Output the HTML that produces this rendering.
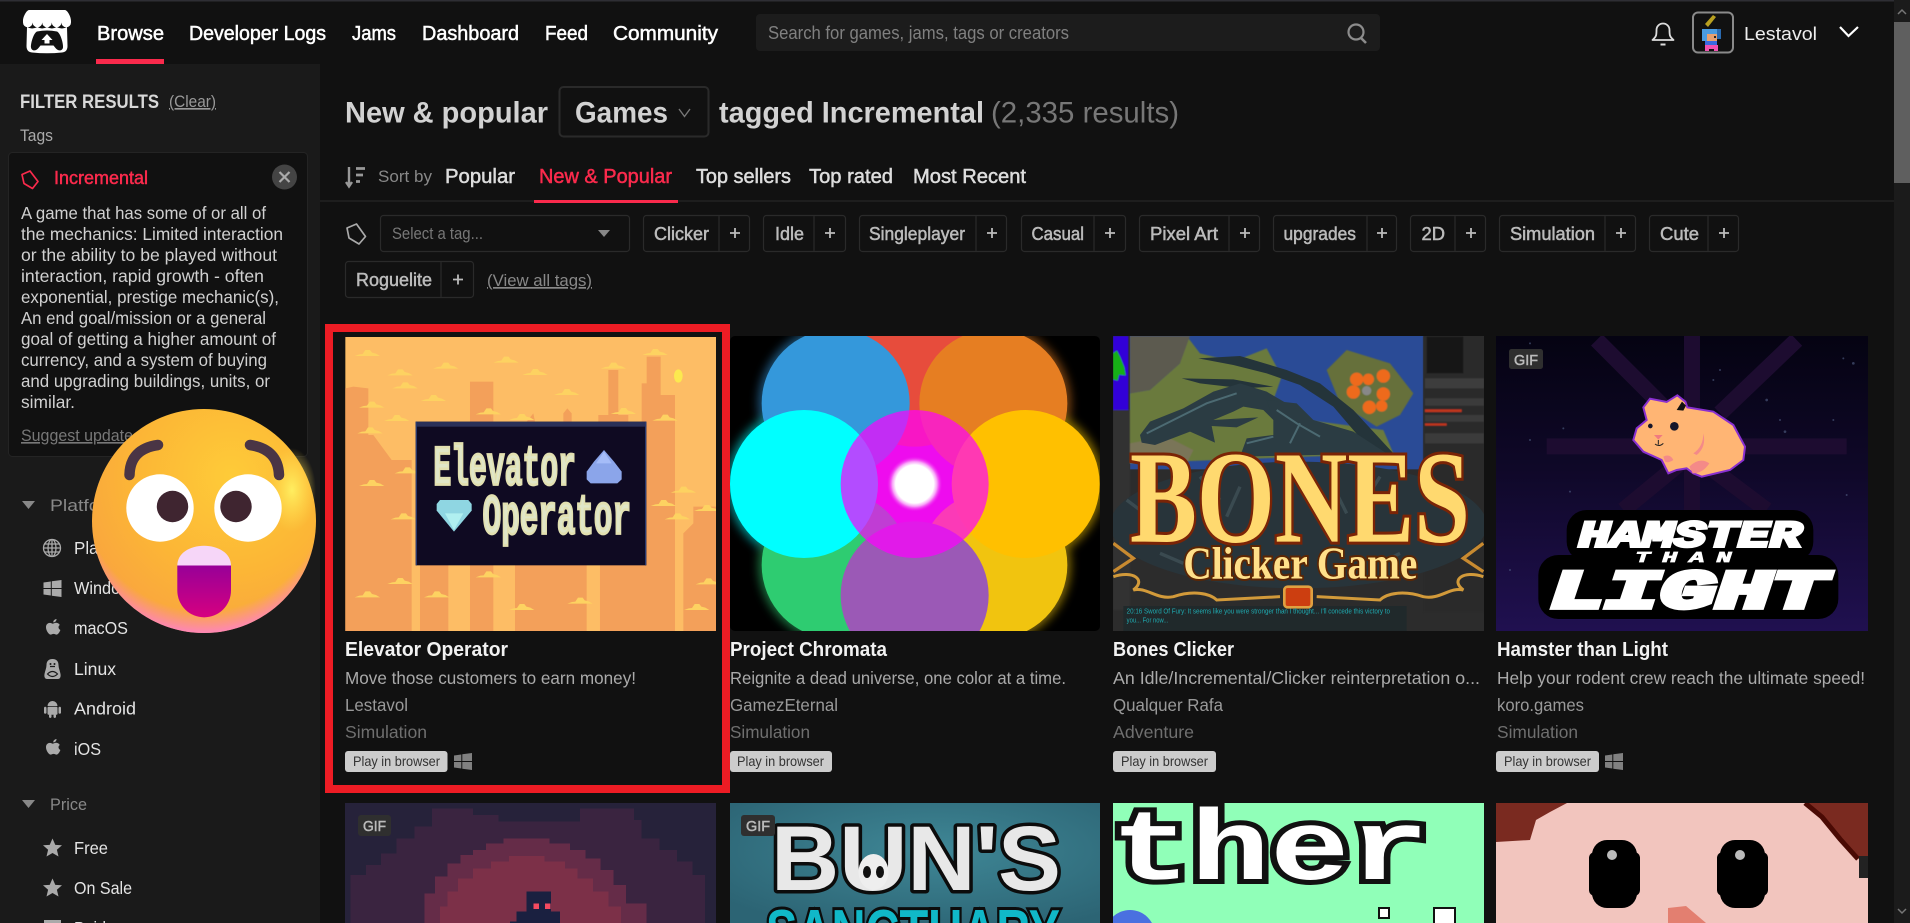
<!DOCTYPE html>
<html lang="en"><head><meta charset="utf-8"><title>Browse games tagged Incremental</title>
<style>
html,body{margin:0;padding:0;background:#111;overflow:hidden;width:1910px;height:923px}
svg{display:block}
text{font-family:"Liberation Sans",sans-serif;white-space:pre}
.mono{font-family:"Liberation Mono",monospace;font-weight:bold}
.serif{font-family:"Liberation Serif",serif;font-weight:bold}
.m{stroke:currentColor;stroke-width:.5px}
.nav{font-size:20px;fill:#fff;color:#fff}
.tab{font-size:20px;fill:#ddd;color:#ddd}
.pl{font-size:18px;fill:#bbb;color:#bbb}
.d{font-size:17.5px;fill:#d0d0d0}
.it{font-size:17.5px;fill:#e4e4e4}
.hd{font-size:17px;fill:#888}
.h1{font-size:30px;font-weight:bold;fill:#d2d2d2}
.ct{font-size:20px;font-weight:bold;fill:#f2f2f2}
.cd{font-size:17.5px;fill:#aaa}
.ca{font-size:17.5px;fill:#999}
.cg{font-size:17.5px;fill:#6f6f6f}
.pb{font-size:14px;fill:#333}
.gif{font-size:15px;fill:#bbb;color:#bbb}
</style></head><body>
<svg xmlns="http://www.w3.org/2000/svg" width="1910" height="923" viewBox="0 0 1910 923">
<defs>
<clipPath id="c1"><rect x="345" y="337" width="371" height="294"/></clipPath>
<clipPath id="c2"><rect x="730" y="336" width="370" height="295" rx="5"/></clipPath>
<clipPath id="c3"><rect x="1113" y="336" width="371" height="295"/></clipPath>
<clipPath id="c4"><rect x="1496" y="336" width="372" height="295"/></clipPath>
<clipPath id="c5"><rect x="345" y="803" width="371" height="120"/></clipPath>
<clipPath id="c6"><rect x="730" y="803" width="370" height="120"/></clipPath>
<clipPath id="c7"><rect x="1113" y="803" width="371" height="120"/></clipPath>
<clipPath id="c8"><rect x="1496" y="803" width="372" height="120"/></clipPath>
<polygon id="cl" points="-38,8 -24,3 -14,2 -6,-10 8,-10 14,-2 26,1 38,8"/>
<g id="win"><polygon points="0,2.500 7.300,1.500 7.300,8 0,8"/><polygon points="8.300,1.300 18,0 18,8 8.300,8"/><polygon points="0,9 7.300,9 7.300,15.500 0,14.500"/><polygon points="8.300,9 18,9 18,17 8.300,15.800"/></g>
<path id="ap" d="M11.500 0c.2 1.700-1.400 3.500-3.200 3.400C8 1.800 9.700.2 11.500 0zM14.800 6c-1.900 1.100-1.700 3.900.6 5-.6 1.700-2.200 4.600-3.900 4.600-1 0-1.600-.7-2.900-.7s-2 .7-2.900.7C3.900 15.600 1 11.700 1 8.200 1 5.300 3 3.900 4.800 3.900c1.200 0 2.200.8 3 .8.700 0 1.900-.9 3.300-.9 1.100 0 2.800.6 3.700 2.200z"/>
<polygon id="st" points="0,-9.500 2.800,-3.100 9.500,-2.700 4.400,1.800 6,8.500 0,5 -6,8.500 -4.400,1.800 -9.500,-2.700 -2.800,-3.100"/>
<radialGradient id="em" cx=".62" cy=".3" r=".78"><stop offset="0" stop-color="#fecb38"/><stop offset=".55" stop-color="#fcb636"/><stop offset=".9" stop-color="#f9a63e"/><stop offset="1" stop-color="#f69a45"/></radialGradient>
<radialGradient id="em2" cx=".5" cy=".36" r=".66"><stop offset=".82" stop-color="#ff80d0" stop-opacity="0"/><stop offset="1" stop-color="#ff80d0"/></radialGradient>
<radialGradient id="em3" cx=".5" cy=".5" r=".5"><stop offset="0" stop-color="#ffee60"/><stop offset="1" stop-color="#ffe050" stop-opacity="0"/></radialGradient>
<linearGradient id="mo" x1="0" y1="0" x2="0" y2="1"><stop offset="0" stop-color="#980098"/><stop offset="1" stop-color="#d60080"/></linearGradient>
<linearGradient id="hb" x1="0" y1="0" x2="0" y2="1"><stop offset="0" stop-color="#050312"/><stop offset=".45" stop-color="#0f0828"/><stop offset="1" stop-color="#201050"/></linearGradient>
<radialGradient id="bn" cx=".55" cy=".4" r=".7"><stop offset="0" stop-color="#3f8796"/><stop offset="1" stop-color="#2c6474"/></radialGradient>
<radialGradient id="wg" cx=".5" cy=".5" r=".5"><stop offset=".68" stop-color="#fff"/><stop offset=".8" stop-color="#f8a0f8"/><stop offset="1" stop-color="#ee0cee" stop-opacity="0"/></radialGradient>
<filter id="bl" x="-30%" y="-30%" width="160%" height="160%"><feGaussianBlur stdDeviation="14"/></filter>
<filter id="bs" x="-5%" y="-5%" width="110%" height="110%"><feGaussianBlur stdDeviation="1.500"/></filter>
</defs>

<!-- page -->
<rect width="1910" height="923" fill="#111"/>
<rect width="1910" height="1.500" fill="#2e2e34"/>
<rect x="0" y="64" width="320" height="859" fill="#1a1a1a"/>
<rect x="1894" y="0" width="16" height="923" fill="#1b1b1b"/>
<rect x="1894" y="22" width="16" height="161" fill="#5f5f5f"/>
<path d="M1898 14l4-4 4 4M1898 909l4 4 4-4" fill="none" stroke="#777" stroke-width="1.500"/>

<!-- logo -->
<path fill="#fff" d="M29 10H65C67 10 71 16 71 21V22.500A4.800 4.800 0 0 1 61.400 22.500A4.800 4.800 0 0 1 51.800 22.500A4.800 4.800 0 0 1 42.200 22.500A4.800 4.800 0 0 1 32.600 22.500A4.800 4.800 0 0 1 23 22.500V21C23 16 27 10 29 10Z"/>
<path fill="#fff" d="M27 27Q32 30 37.400 27Q42 30 47 27Q52 30 56.600 27Q62 30 67 27L67.500 46Q67.500 52 62 52.500Q47 54 32 52.500Q26.500 52 26.500 46Z"/>
<path fill="#111" d="M37 31.500Q47 29.500 57 31.500C60.500 33 63.500 44 63 47.500C62.500 51 58 51.500 55.500 48L53.500 45.500H40.500L38.500 48C36 51.500 31.500 51 31 47.500C30.500 44 33.500 33 37 31.500Z"/>
<path fill="#fff" d="M47 34L52.500 40H49.500V43.500H44.500V40H41.500Z"/>

<!-- nav -->
<g class="m">
<text x="97" y="40" class="nav" textLength="67" lengthAdjust="spacingAndGlyphs">Browse</text>
<text x="189" y="40" class="nav" textLength="137" lengthAdjust="spacingAndGlyphs">Developer Logs</text>
<text x="352" y="40" class="nav" textLength="44" lengthAdjust="spacingAndGlyphs">Jams</text>
<text x="422" y="40" class="nav" textLength="97" lengthAdjust="spacingAndGlyphs">Dashboard</text>
<text x="545" y="40" class="nav" textLength="43" lengthAdjust="spacingAndGlyphs">Feed</text>
<text x="613" y="40" class="nav" textLength="105" lengthAdjust="spacingAndGlyphs">Community</text>
</g>
<rect x="96" y="59" width="68" height="5" fill="#fa2a4c"/>
<rect x="756" y="14" width="624" height="37" rx="4" fill="#1c1c1c"/>
<text x="768" y="39" font-size="18" fill="#808080" textLength="301" lengthAdjust="spacingAndGlyphs">Search for games, jams, tags or creators</text>
<circle cx="1356" cy="32" r="7.500" fill="none" stroke="#8c8c8c" stroke-width="2.200"/><path d="M1361 38l5 5" stroke="#8c8c8c" stroke-width="2.600"/>
<path d="M1654 38.500c2-2 2.500-3 2.500-8.500a6.500 6.500 0 0 1 13 0c0 5.500.5 6.500 2.500 8.500l1.500 1.500H1652.500Z" fill="none" stroke="#ddd" stroke-width="1.800" stroke-linejoin="round"/><path d="M1660.500 44.500h5" stroke="#ddd" stroke-width="2"/>
<rect x="1693" y="12.500" width="40" height="40" rx="5" fill="#111" stroke="#8a8a8a" stroke-width="2"/>
<polygon points="1705,24 1713,15 1716,17 1708,27" fill="#b8a020"/>
<rect x="1702" y="29" width="19" height="5" fill="#4a9be0"/><rect x="1702" y="34" width="5" height="7" fill="#4a9be0"/><rect x="1717" y="29" width="4" height="10" fill="#2a6ab0"/>
<rect x="1707" y="34" width="10" height="7" fill="#e8a070"/><rect x="1714" y="36" width="2" height="2" fill="#222"/>
<rect x="1705" y="41" width="12" height="4" fill="#3a6ae0"/><rect x="1705" y="45" width="13" height="4" fill="#f050b0"/><rect x="1705" y="49" width="4" height="2" fill="#f050b0"/><rect x="1714" y="49" width="4" height="2" fill="#f050b0"/>
<text x="1744" y="40" font-size="18" fill="#eee" textLength="73" lengthAdjust="spacingAndGlyphs">Lestavol</text>
<path d="M1840 27l8.500 9 9.500-9" fill="none" stroke="#fff" stroke-width="2.200"/>

<!-- sidebar -->
<text x="20" y="108" font-size="19" font-weight="bold" fill="#d8d8d8" textLength="139" lengthAdjust="spacingAndGlyphs">FILTER RESULTS</text>
<text x="169" y="107" font-size="16.500" fill="#999" text-decoration="underline" textLength="47" lengthAdjust="spacingAndGlyphs">(Clear)</text>
<text x="20" y="141" font-size="17" fill="#aaa" textLength="33" lengthAdjust="spacingAndGlyphs">Tags</text>
<rect x="8.500" y="152.500" width="299" height="304" rx="4" fill="#111" stroke="#242424"/>
<path d="M22 174.500l8-3.500 8 10.500-5.500 7-8.500-5Z" fill="none" stroke="#fa2a4c" stroke-width="1.700" stroke-linejoin="round"/>
<text x="54" y="184" font-size="18" fill="#fa2a4c" color="#fa2a4c" class="m" textLength="94" lengthAdjust="spacingAndGlyphs">Incremental</text>
<circle cx="284.500" cy="177" r="12.500" fill="#444"/><path d="M279.500 172l10 10M289.500 172l-10 10" stroke="#aaa" stroke-width="2.200"/>
<text x="21" y="219" class="d" textLength="245" lengthAdjust="spacingAndGlyphs">A game that has some of or all of</text>
<text x="21" y="240" class="d" textLength="262" lengthAdjust="spacingAndGlyphs">the mechanics: Limited interaction</text>
<text x="21" y="261" class="d" textLength="256" lengthAdjust="spacingAndGlyphs">or the ability to be played without</text>
<text x="21" y="282" class="d" textLength="243" lengthAdjust="spacingAndGlyphs">interaction, rapid growth - often</text>
<text x="21" y="303" class="d" textLength="258" lengthAdjust="spacingAndGlyphs">exponential, prestige mechanic(s),</text>
<text x="21" y="324" class="d" textLength="245" lengthAdjust="spacingAndGlyphs">An end goal/mission or a general</text>
<text x="21" y="345" class="d" textLength="255" lengthAdjust="spacingAndGlyphs">goal of getting a higher amount of</text>
<text x="21" y="366" class="d" textLength="246" lengthAdjust="spacingAndGlyphs">currency, and a system of buying</text>
<text x="21" y="387" class="d" textLength="249" lengthAdjust="spacingAndGlyphs">and upgrading buildings, units, or</text>
<text x="21" y="408" class="d" textLength="54" lengthAdjust="spacingAndGlyphs">similar.</text>
<text x="21" y="441" font-size="16.500" fill="#777" text-decoration="underline" textLength="112" lengthAdjust="spacingAndGlyphs">Suggest update</text>

<polygon points="22,501 35,501 28.500,509" fill="#888"/>
<text x="50" y="511" class="hd" textLength="72" lengthAdjust="spacingAndGlyphs">Platform</text>
<g transform="translate(52,548)" fill="none" stroke="#aaa" stroke-width="1.300"><circle r="8.500"/><ellipse rx="4" ry="8.500"/><path d="M0-8.500V8.500M-8.500 0H8.500M-7.500-4H7.500M-7.500 4H7.500"/></g>
<text x="74" y="554" class="it" textLength="116" lengthAdjust="spacingAndGlyphs">Play in browser</text>
<use href="#win" x="43.500" y="580" fill="#aaa"/>
<text x="74" y="594" class="it" textLength="66" lengthAdjust="spacingAndGlyphs">Windows</text>
<use href="#ap" x="45" y="619" fill="#aaa"/>
<text x="74" y="634" class="it" textLength="54" lengthAdjust="spacingAndGlyphs">macOS</text>
<g transform="translate(44,659)"><path d="M8.500 0C4 0 2.500 3 2.500 6C2.500 9 1 12 .5 15C0 18 1 20 3 20H14C16 20 17 18 16.500 15C16 12 14.500 9 14.500 6C14.500 3 13 0 8.500 0Z" fill="#aaa"/><path d="M6 7.500h5M3.500 15Q8.500 10 13.500 15Q8.500 20 3.500 15Z" fill="none" stroke="#1a1a1a" stroke-width="1.200"/><circle cx="6.500" cy="5" r="1" fill="#1a1a1a"/><circle cx="10.500" cy="5" r="1" fill="#1a1a1a"/></g>
<text x="74" y="675" class="it" textLength="42" lengthAdjust="spacingAndGlyphs">Linux</text>
<g transform="translate(44,699)" fill="#aaa"><path d="M3.500 7A5 5 0 0 1 13.500 7Z"/><rect x="3.500" y="7.800" width="10" height="8" rx="1"/><rect x="0" y="7.800" width="2.500" height="7" rx="1.200"/><rect x="14.500" y="7.800" width="2.500" height="7" rx="1.200"/><rect x="5" y="15" width="2.500" height="4" rx="1.200"/><rect x="9.500" y="15" width="2.500" height="4" rx="1.200"/></g>
<text x="74" y="714.500" class="it" textLength="62" lengthAdjust="spacingAndGlyphs">Android</text>
<use href="#ap" x="45" y="739" fill="#aaa"/>
<text x="74" y="755" class="it" textLength="27" lengthAdjust="spacingAndGlyphs">iOS</text>
<polygon points="22,800 35,800 28.500,808" fill="#888"/>
<text x="50" y="810" class="hd" textLength="37" lengthAdjust="spacingAndGlyphs">Price</text>
<use href="#st" x="52.500" y="848" fill="#aaa"/>
<text x="74" y="854" class="it" textLength="34" lengthAdjust="spacingAndGlyphs">Free</text>
<use href="#st" x="52.500" y="888" fill="#aaa"/>
<text x="74" y="894" class="it" textLength="58" lengthAdjust="spacingAndGlyphs">On Sale</text>
<rect x="44" y="920" width="17" height="12" fill="#aaa"/>
<text x="74" y="934" class="it" textLength="32" lengthAdjust="spacingAndGlyphs">Paid</text>

<!-- header row -->
<text x="345" y="122.500" class="h1" textLength="203" lengthAdjust="spacingAndGlyphs">New &amp; popular</text>
<rect x="559.500" y="87" width="149" height="49.500" rx="4" fill="none" stroke="#2a2a2a" stroke-width="2"/>
<text x="575" y="122.500" class="h1" textLength="93" lengthAdjust="spacingAndGlyphs">Games</text>
<path d="M679 109l5.500 7.500 5.500-7.500" fill="none" stroke="#777" stroke-width="1.400"/>
<text x="719" y="122.500" class="h1" textLength="265" lengthAdjust="spacingAndGlyphs">tagged Incremental</text>
<text x="991" y="122.500" font-size="30" fill="#777" textLength="188" lengthAdjust="spacingAndGlyphs">(2,335 results)</text>

<!-- sort row -->
<path d="M349 167v18M346 182l3 4.500 3-4.500" fill="none" stroke="#999" stroke-width="2.400"/><path d="M356 168.500h9M356 175h7M356 181.500h4" stroke="#999" stroke-width="2.800"/>
<text x="378" y="182" class="hd" textLength="54" lengthAdjust="spacingAndGlyphs">Sort by</text>
<g class="m">
<text x="445" y="183" class="tab" textLength="70" lengthAdjust="spacingAndGlyphs">Popular</text>
<text x="539" y="183" font-size="20" fill="#fa2a4c" color="#fa2a4c" textLength="133" lengthAdjust="spacingAndGlyphs">New &amp; Popular</text>
<text x="696" y="183" class="tab" textLength="95" lengthAdjust="spacingAndGlyphs">Top sellers</text>
<text x="809" y="183" class="tab" textLength="84" lengthAdjust="spacingAndGlyphs">Top rated</text>
<text x="913" y="183" class="tab" textLength="113" lengthAdjust="spacingAndGlyphs">Most Recent</text>
</g>
<rect x="320" y="200" width="1574" height="2" fill="#1e1e1e"/>
<rect x="534" y="200" width="144" height="3" fill="#fa2a4c"/>

<!-- tag row -->
<path d="M347 228l9.500-4 9 12.500-6.500 7.500-10-6Z" fill="none" stroke="#aaa" stroke-width="1.700" stroke-linejoin="round"/>
<rect x="380.500" y="215.500" width="249" height="36" rx="3" fill="none" stroke="#2a2a2a" stroke-width="1.200"/>
<text x="392" y="239" font-size="16.500" fill="#777" textLength="91" lengthAdjust="spacingAndGlyphs">Select a tag...</text>
<polygon points="598,230 610,230 604,237" fill="#888"/>
<g fill="none" stroke="#2a2a2a" stroke-width="1.200">
<rect x="643.500" y="215.500" width="106" height="36" rx="3"/><path d="M719 215.500v36"/>
<rect x="763.500" y="215.500" width="82" height="36" rx="3"/><path d="M814 215.500v36"/>
<rect x="859.500" y="215.500" width="147" height="36" rx="3"/><path d="M976 215.500v36"/>
<rect x="1021.500" y="215.500" width="104" height="36" rx="3"/><path d="M1094 215.500v36"/>
<rect x="1139.500" y="215.500" width="120" height="36" rx="3"/><path d="M1229 215.500v36"/>
<rect x="1273.500" y="215.500" width="123" height="36" rx="3"/><path d="M1367 215.500v36"/>
<rect x="1410.500" y="215.500" width="75" height="36" rx="3"/><path d="M1455 215.500v36"/>
<rect x="1499.500" y="215.500" width="136" height="36" rx="3"/><path d="M1605 215.500v36"/>
<rect x="1649.500" y="215.500" width="89" height="36" rx="3"/><path d="M1708 215.500v36"/>
<rect x="345.500" y="261.500" width="128" height="36" rx="3"/><path d="M441 261.500v36"/>
</g>
<g class="m">
<text x="654" y="240" class="pl" textLength="55" lengthAdjust="spacingAndGlyphs">Clicker</text>
<text x="775" y="240" class="pl" textLength="29" lengthAdjust="spacingAndGlyphs">Idle</text>
<text x="869" y="240" class="pl" textLength="96" lengthAdjust="spacingAndGlyphs">Singleplayer</text>
<text x="1031.500" y="240" class="pl" textLength="52.500" lengthAdjust="spacingAndGlyphs">Casual</text>
<text x="1150" y="240" class="pl" textLength="68" lengthAdjust="spacingAndGlyphs">Pixel Art</text>
<text x="1283.500" y="240" class="pl" textLength="72.500" lengthAdjust="spacingAndGlyphs">upgrades</text>
<text x="1421.500" y="240" class="pl" textLength="23.500" lengthAdjust="spacingAndGlyphs">2D</text>
<text x="1510" y="240" class="pl" textLength="85" lengthAdjust="spacingAndGlyphs">Simulation</text>
<text x="1660" y="240" class="pl" textLength="39" lengthAdjust="spacingAndGlyphs">Cute</text>
<text x="356" y="286" class="pl" textLength="76" lengthAdjust="spacingAndGlyphs">Roguelite</text>
</g>
<path stroke="#bbb" stroke-width="1.800" d="M730 233h10M735 228v10M825 233h10M830 228v10M987 233h10M992 228v10M1105 233h10M1110 228v10M1240 233h10M1245 228v10M1377 233h10M1382 228v10M1466 233h10M1471 228v10M1616 233h10M1621 228v10M1719 233h10M1724 228v10M453 279.500h10M458 274.500v10"/>
<text x="487" y="286" font-size="17" fill="#888" text-decoration="underline" textLength="105" lengthAdjust="spacingAndGlyphs">(View all tags)</text>

<!-- card 1: Elevator Operator -->
<g clip-path="url(#c1)"><g transform="translate(320,320) scale(.33333)">
<rect x="76" y="50" width="1112" height="900" fill="#fdbd65"/>
<g fill="#f3a05a">
<polygon points="76,205 100,200 145,205 145,345 160,345 215,420 275,420 275,950 76,950"/>
<rect x="450" y="185" width="70" height="120"/><rect x="865" y="150" width="30" height="140"/><rect x="835" y="285" width="90" height="25"/>
<polygon points="965,190 980,190 980,110 1022,110 1022,225 1065,225 1065,950 840,950 840,730 965,730"/>
<polygon points="730,305 730,280 742,265 755,280 755,305"/><polygon points="620,305 640,280 645,305"/>
<rect x="300" y="735" width="85" height="215"/><rect x="450" y="735" width="70" height="215"/><rect x="585" y="735" width="215" height="215"/>
<polygon points="1090,950 1090,640 1120,610 1120,560 1188,560 1188,950"/>
</g>
<g fill="#fdd261">
<use href="#cl" x="142" y="100"/><use href="#cl" x="240" y="158"/><use href="#cl" x="255" y="197"/><use href="#cl" x="377" y="138"/><use href="#cl" x="340" y="235"/><use href="#cl" x="558" y="120"/><use href="#cl" x="645" y="157"/><use href="#cl" x="740" y="217"/><use href="#cl" x="880" y="138"/><use href="#cl" x="1005" y="97"/><use href="#cl" x="230" y="295"/><use href="#cl" x="155" y="255"/><use href="#cl" x="150" y="332"/><use href="#cl" x="505" y="275"/><use href="#cl" x="605" y="292"/><use href="#cl" x="910" y="274"/><use href="#cl" x="1035" y="294"/><use href="#cl" x="155" y="490"/><use href="#cl" x="262" y="452"/><use href="#cl" x="250" y="590"/><use href="#cl" x="1030" y="550"/><use href="#cl" x="1072" y="590"/><use href="#cl" x="1160" y="565"/><use href="#cl" x="505" y="764"/><use href="#cl" x="240" y="784"/><use href="#cl" x="142" y="824"/><use href="#cl" x="350" y="824"/><use href="#cl" x="605" y="862"/><use href="#cl" x="780" y="843"/><use href="#cl" x="1130" y="862"/><use href="#cl" x="1165" y="785"/><use href="#cl" x="1090" y="510"/>
</g>
<ellipse cx="1075" cy="168" rx="13" ry="20" fill="#fce94f"/>
<rect x="287" y="305" width="692" height="431" fill="#0f0a22"/>
<rect x="287" y="305" width="692" height="15" fill="#2a3058"/><rect x="287" y="305" width="4" height="431" fill="#2a3a70"/><rect x="975" y="305" width="4" height="431" fill="#2a3a70"/>
<text x="340" y="494" class="mono" font-size="170" fill="#e0e6c8" stroke="#e2e0b0" stroke-width="8" textLength="428" lengthAdjust="spacingAndGlyphs">Elevator</text>
<text x="488" y="640" class="mono" font-size="170" fill="#e0e6c8" stroke="#e2e0b0" stroke-width="8" textLength="445" lengthAdjust="spacingAndGlyphs">Operator</text>
<polygon points="852,390 882,425 905,455 905,478 892,490 812,490 800,478 800,455 822,425" fill="#8ba5ea"/>
<polygon points="852,395 875,430 828,430" fill="#a5bcf8"/>
<polygon points="360,540 445,540 455,552 455,572 402,635 350,572 350,552" fill="#8fd6e2"/>
<polygon points="375,580 430,580 402,630" fill="#b0f0f0"/>
</g></g>

<!-- card 2: Project Chromata -->
<g clip-path="url(#c2)">
<rect x="730" y="336" width="370" height="295" fill="#000"/>
<g transform="translate(720,320) scale(.33333)">
<g filter="url(#bl)" opacity=".55"><circle cx="347" cy="250" r="232" fill="#3498db"/><circle cx="820" cy="250" r="232" fill="#e67e22"/><circle cx="252" cy="492" r="232" fill="#0ff"/><circle cx="917" cy="492" r="232" fill="#fc0"/><circle cx="347" cy="735" r="232" fill="#2ecc71"/><circle cx="820" cy="735" r="232" fill="#f1c40f"/></g>
<circle cx="584" cy="492" r="190" fill="#c628c6"/>
<circle cx="584" cy="158" r="222" fill="#e74c3c"/>
<circle cx="347" cy="250" r="222" fill="#3498db"/>
<circle cx="820" cy="250" r="222" fill="#e67e22"/>
<circle cx="347" cy="735" r="222" fill="#2ecc71"/>
<circle cx="820" cy="735" r="222" fill="#f1c40f"/>
<circle cx="584" cy="826" r="222" fill="#9b59b6"/>
<circle cx="252" cy="492" r="222" fill="#0ff"/>
<circle cx="917" cy="492" r="222" fill="#ffc000"/>
<circle cx="584" cy="492" r="222" fill="#f0f" fill-opacity=".7"/>
<circle cx="584" cy="492" r="84" fill="url(#wg)"/>
</g></g>

<!-- card 3: Bones Clicker -->
<g clip-path="url(#c3)"><g transform="translate(1100,320) scale(.33333)">
<rect x="39" y="48" width="1113" height="885" fill="#2c2c2c"/>
<rect x="90" y="48" width="880" height="400" fill="#2a4b96"/>
<g filter="url(#bs)">
<polygon points="260,48 300,100 400,125 500,85 545,170 520,240 620,300 850,330 880,400 90,430 90,220 150,210 240,130" fill="#6b7a3c"/>
<polygon points="90,48 270,48 240,130 150,210 90,220" fill="#5c5a50"/>
<polygon points="90,370 200,350 280,390 260,430 90,430" fill="#7a7458"/>
<polygon points="680,150 740,90 870,130 940,220 900,285 830,320 720,250" fill="#66703a"/>
<circle cx="770" cy="178" r="20" fill="#ee6a1a"/><circle cx="805" cy="178" r="17" fill="#ee6a1a"/><circle cx="850" cy="168" r="20" fill="#ee6a1a"/><circle cx="760" cy="216" r="20" fill="#ee6a1a"/><circle cx="850" cy="222" r="20" fill="#ee6a1a"/><circle cx="808" cy="262" r="20" fill="#ee6a1a"/><circle cx="845" cy="258" r="17" fill="#ee6a1a"/><circle cx="800" cy="212" r="14" fill="#888"/>
<rect x="39" y="48" width="46" height="222" fill="#3300d8"/>
<path d="M39 100l12-8 10 20 12 30 4 24-20-2-4 18-14-4Z" fill="#12b012"/>
<rect x="39" y="270" width="51" height="600" fill="#333"/>
<rect x="970" y="48" width="182" height="830" fill="#2c2c2c"/><rect x="980" y="50" width="110" height="110" fill="#171717"/>
<rect x="975" y="175" width="177" height="30" fill="#3c3c3c"/><rect x="975" y="235" width="177" height="22" fill="#3a3a3a"/><rect x="975" y="285" width="177" height="20" fill="#3a3a3a"/><rect x="975" y="340" width="177" height="30" fill="#3a3a3a"/>
<rect x="975" y="268" width="110" height="8" fill="#c0341a"/><rect x="975" y="310" width="65" height="7" fill="#c0341a"/>
</g>
<polygon points="295,115 420,108 560,150 660,190 760,270 880,400 820,400 700,260 600,195 500,160 400,135" fill="#24343a"/>
<polygon points="245,175 400,178 520,200 430,205 300,190" fill="#24343a"/>
<polygon points="120,345 150,305 250,265 340,215 420,190 500,215 560,250 520,300 490,270 430,260 400,275 340,300 475,292 410,322 335,318 345,368 270,335 165,375 125,368" fill="#2b3c43"/>
<polygon points="500,240 590,250 640,300 760,335 860,400 420,410 440,355 520,345 520,300" fill="#2b3c43"/>
<path d="M140 340l80-40 100-50 90-30M530 270l60 40 70 40M440 370l80-20M600 310l-30 60" fill="none" stroke="#4c6a72" stroke-width="6"/>
<ellipse cx="595" cy="615" rx="565" ry="190" fill="#28343a"/>
<path d="M80 540l80 60M300 470l60 70M840 470l-50 80M1010 530l80 60M180 700l70 30M900 700l-60 30M420 500l-40 90M700 500l40 80" stroke="#3a4a50" stroke-width="10" fill="none"/>
<text x="90" y="665" class="serif" font-size="395" fill="#ffd96f" stroke="#7a2406" stroke-width="18" paint-order="stroke" textLength="1020" lengthAdjust="spacingAndGlyphs">BONES</text>
<text x="250" y="775" class="serif" font-size="138" fill="#ffe08a" stroke="#5c2604" stroke-width="12" paint-order="stroke" textLength="702" lengthAdjust="spacingAndGlyphs">Clicker Game</text>
<rect x="70" y="858" width="850" height="75" fill="#20292b"/>
<path d="M40 770c60-20 100 10 60 40 40-10 70 30 120 20 60-20 110-10 130 10l190-10M1150 770c-60-20-100 10-60 40-40-10-70 30-120 20-60-20-110-10-130 10l-190-10" fill="none" stroke="#d29a3a" stroke-width="9"/>
<path d="M40 670l60 45-60 40M1150 670l-60 45 60 40" fill="none" stroke="#c88a30" stroke-width="10"/>
<rect x="553" y="800" width="82" height="62" rx="10" fill="#cc3e10" stroke="#e0a040" stroke-width="8"/>
<text x="80" y="880" font-size="21" fill="#1faab0" textLength="790" lengthAdjust="spacingAndGlyphs">20:16 Sword Of Fury: It seems like you were stronger than I thought... I'll concede this victory to</text>
<text x="80" y="908" font-size="21" fill="#1faab0" textLength="125" lengthAdjust="spacingAndGlyphs">you... For now...</text>
</g></g>

<!-- card 4: Hamster than Light -->
<g clip-path="url(#c4)"><g transform="translate(1480,320) scale(.33333)">
<rect x="48" y="48" width="1116" height="885" fill="url(#hb)"/>
<g fill="none" stroke="#1d0c30" stroke-width="48">
<path d="M636 48V570M200 379H1100M350 60L560 270M950 60L720 280M430 570L600 430M860 570L700 450"/>
</g>
<g fill="#5a6a90" opacity=".55"><circle cx="150" cy="70" r="3"/><circle cx="1120" cy="130" r="4"/><circle cx="1090" cy="115" r="3"/><circle cx="720" cy="150" r="3"/><circle cx="860" cy="240" r="4"/><circle cx="900" cy="300" r="3"/><circle cx="915" cy="335" r="4"/><circle cx="150" cy="360" r="3"/><circle cx="250" cy="325" r="3"/><circle cx="270" cy="515" r="3"/><circle cx="1100" cy="525" r="3"/><circle cx="1060" cy="300" r="3"/><circle cx="700" cy="180" r="3"/><circle cx="90" cy="750" r="3"/></g>
<path d="M490 262L510 236L560 246L592 226L616 245L622 262L700 275L760 315L795 380L790 420L750 450L665 470L640 460L620 445L590 450L565 460L545 420L490 395L460 360L470 325L500 300Z" fill="#ffb574" stroke="#8a30d0" stroke-width="6"/>
<path d="M590 270l16-25 12 12-8 15Z" fill="#111"/>
<circle cx="583" cy="319" r="13" fill="#15152a"/><circle cx="511" cy="318" r="7" fill="#15152a"/>
<path d="M522 345h26l-13 14Z" fill="#f07a80"/><path d="M525 372q12 10 25-2M535 360v14" fill="none" stroke="#222" stroke-width="3"/>
<path d="M628 440q30-30 60-10q-20 30-50 30ZM550 410q20-10 30 10q-15 10-25 5ZM640 400q30-20 30-60q10 40-20 65Z" fill="#f48a88"/>
<rect x="260" y="570" width="740" height="155" rx="60" fill="#000"/>
<rect x="175" y="705" width="900" height="192" rx="60" fill="#000"/>
<g class="mono" font-style="italic" fill="#fff">
<text x="295" y="680" class="mono" font-size="112" stroke="#fff" stroke-width="9" textLength="670" lengthAdjust="spacingAndGlyphs">HAMSTER</text>
<text x="208" y="862" class="mono" font-size="160" stroke="#fff" stroke-width="14" textLength="832" lengthAdjust="spacingAndGlyphs">LIGHT</text>
<text x="465" y="726" class="mono" font-size="44" stroke="#fff" stroke-width="2" letter-spacing="20" textLength="325" lengthAdjust="spacingAndGlyphs">THAN</text>
</g>
</g></g>
<rect x="1509" y="349" width="34" height="20" rx="2.500" fill="#2f2f2f"/>
<text x="1514" y="365" class="gif m" textLength="24" lengthAdjust="spacingAndGlyphs">GIF</text>

<!-- red highlight -->
<rect x="329" y="328" width="397" height="461" fill="none" stroke="#ed1c24" stroke-width="8"/>

<!-- card text -->
<text x="345" y="656" class="ct" textLength="163" lengthAdjust="spacingAndGlyphs">Elevator Operator</text>
<text x="345" y="684" class="cd" textLength="291" lengthAdjust="spacingAndGlyphs">Move those customers to earn money!</text>
<text x="345" y="711" class="ca" textLength="63" lengthAdjust="spacingAndGlyphs">Lestavol</text>
<text x="345" y="738" class="cg" textLength="82" lengthAdjust="spacingAndGlyphs">Simulation</text>
<rect x="345" y="751" width="102.500" height="21" rx="3" fill="#ccc"/>
<text x="353" y="766" class="pb" textLength="87" lengthAdjust="spacingAndGlyphs">Play in browser</text>
<use href="#win" x="454" y="753" fill="#808080"/>

<text x="730" y="656" class="ct" textLength="157" lengthAdjust="spacingAndGlyphs">Project Chromata</text>
<text x="730" y="684" class="cd" textLength="336" lengthAdjust="spacingAndGlyphs">Reignite a dead universe, one color at a time.</text>
<text x="730" y="711" class="ca" textLength="108" lengthAdjust="spacingAndGlyphs">GamezEternal</text>
<text x="730" y="738" class="cg" textLength="80" lengthAdjust="spacingAndGlyphs">Simulation</text>
<rect x="730" y="751" width="102" height="21" rx="3" fill="#ccc"/>
<text x="737" y="766" class="pb" textLength="87" lengthAdjust="spacingAndGlyphs">Play in browser</text>

<text x="1113" y="656" class="ct" textLength="121" lengthAdjust="spacingAndGlyphs">Bones Clicker</text>
<text x="1113" y="684" class="cd" textLength="367" lengthAdjust="spacingAndGlyphs">An Idle/Incremental/Clicker reinterpretation o...</text>
<text x="1113" y="711" class="ca" textLength="110" lengthAdjust="spacingAndGlyphs">Qualquer Rafa</text>
<text x="1113" y="738" class="cg" textLength="81" lengthAdjust="spacingAndGlyphs">Adventure</text>
<rect x="1113" y="751" width="103" height="21" rx="3" fill="#ccc"/>
<text x="1121" y="766" class="pb" textLength="87" lengthAdjust="spacingAndGlyphs">Play in browser</text>

<text x="1497" y="656" class="ct" textLength="171" lengthAdjust="spacingAndGlyphs">Hamster than Light</text>
<text x="1497" y="684" class="cd" textLength="368" lengthAdjust="spacingAndGlyphs">Help your rodent crew reach the ultimate speed!</text>
<text x="1497" y="711" class="ca" textLength="87" lengthAdjust="spacingAndGlyphs">koro.games</text>
<text x="1497" y="738" class="cg" textLength="81" lengthAdjust="spacingAndGlyphs">Simulation</text>
<rect x="1496" y="751" width="103" height="21" rx="3" fill="#ccc"/>
<text x="1504" y="766" class="pb" textLength="87" lengthAdjust="spacingAndGlyphs">Play in browser</text>
<use href="#win" x="1605" y="753" fill="#808080"/>

<!-- row 2 -->
<g clip-path="url(#c5)"><rect x="345" y="803" width="371" height="120" fill="#26223a"/>
<g transform="translate(320,630) scale(.5102,.33333)" shape-rendering="crispEdges">
<polygon fill="#3a2440" points="60,900 60,735 90,735 90,705 120,705 120,670 150,670 150,625 185,625 185,590 220,590 220,535 300,535 300,555 350,555 350,575 510,575 510,535 615,535 615,570 630,570 630,625 665,625 665,660 700,660 700,695 730,695 730,735 755,735 755,900"/>
<polygon fill="#652c48" points="205,900 205,790 225,790 225,740 250,740 250,700 275,700 275,675 300,675 300,660 325,660 325,640 360,640 360,625 450,625 450,640 490,640 490,660 520,660 520,685 550,685 550,720 575,720 575,765 600,765 600,820 640,820 640,900"/>
<polygon fill="#7c3048" points="235,900 235,830 250,830 250,785 270,785 270,745 300,745 300,715 335,715 335,695 370,695 370,678 440,678 440,695 480,695 480,715 505,715 505,745 535,745 535,785 565,785 565,830 590,830 590,900"/>
<polygon fill="#1a2040" points="372,900 372,875 385,875 385,845 405,845 405,785 453,785 453,845 470,845 470,900"/>
<rect x="418" y="820" width="11" height="17" fill="#f44a60"/><rect x="441" y="820" width="11" height="17" fill="#f44a60"/>
</g></g>
<rect x="358" y="815" width="33" height="21" rx="3" fill="#2f2f2f"/>
<text x="363" y="831" class="gif m" textLength="23" lengthAdjust="spacingAndGlyphs">GIF</text>

<g clip-path="url(#c6)"><rect x="730" y="803" width="370" height="120" fill="url(#bn)"/>
<text x="771" y="890" font-size="92" font-weight="bold" fill="#e8e8e8" stroke="#0c0c0c" stroke-width="7" paint-order="stroke" stroke-linejoin="round" textLength="290" lengthAdjust="spacingAndGlyphs">BUN'S</text>
<ellipse cx="873.500" cy="872" rx="15" ry="18" fill="#eee"/>
<ellipse cx="867" cy="872" rx="4" ry="6" fill="#111"/><ellipse cx="880" cy="872" rx="4" ry="6" fill="#111"/>
<text x="766" y="953" font-size="62" font-weight="bold" fill="#10b8c8" stroke="#0c0c0c" stroke-width="6" paint-order="stroke" textLength="294" lengthAdjust="spacingAndGlyphs">SANCTUARY</text>
</g>
<rect x="741" y="815" width="34" height="21" rx="3" fill="#2f2f2f"/>
<text x="746" y="831" class="gif m" textLength="24" lengthAdjust="spacingAndGlyphs">GIF</text>

<g clip-path="url(#c7)"><rect x="1113" y="803" width="371" height="120" fill="#90ffb8"/>
<text x="1111" y="879" class="mono" font-size="100" fill="#fff" stroke="#111" stroke-width="10" paint-order="stroke" textLength="318" lengthAdjust="spacingAndGlyphs">ther</text>
<circle cx="1130" cy="935" r="25" fill="#4a70e0"/>
<rect x="1379" y="908" width="10" height="10" fill="#fff" stroke="#111" stroke-width="2"/>
<rect x="1434" y="908" width="21" height="20" fill="#fff" stroke="#111" stroke-width="2"/>
</g>

<g clip-path="url(#c8)"><rect x="1496" y="803" width="372" height="120" fill="#f2c5be"/>
<polygon points="1496,803 1567,803 1550,812 1536,820 1530,840 1496,842" fill="#7a2a20"/>
<polygon points="1805,803 1868,803 1868,862 1858,858 1840,838 1822,815" fill="#7a2a20"/>
<path d="M1805 803l17 14 18 22 18 20" fill="none" stroke="#4a0a04" stroke-width="5"/>
<rect x="1592" y="840" width="45" height="68" rx="15" fill="#000"/><rect x="1589" y="852" width="51" height="44" rx="6" fill="#000"/>
<rect x="1720" y="840" width="45" height="68" rx="15" fill="#000"/><rect x="1717" y="852" width="51" height="44" rx="6" fill="#000"/>
<circle cx="1612" cy="855" r="5" fill="#bbb"/><circle cx="1740" cy="855" r="5" fill="#bbb"/>
<polygon points="1668,908 1686,906 1706,923 1668,923" fill="#e37f70"/>
<rect x="1859" y="856" width="9" height="22" fill="#222"/>
</g>

<!-- emoji -->
<g>
<circle cx="204" cy="521" r="112" fill="url(#em)"/>
<circle cx="204" cy="521" r="112" fill="url(#em2)"/>
<ellipse cx="292" cy="490" rx="24" ry="42" fill="url(#em3)"/>
<path d="M129.500 475Q130 449 158 445" fill="none" stroke="#4a3545" stroke-width="10.500" stroke-linecap="round"/>
<path d="M250 445Q278 449 279 475" fill="none" stroke="#4a3545" stroke-width="10.500" stroke-linecap="round"/>
<circle cx="160" cy="508" r="33.700" fill="#fff"/><circle cx="248" cy="508" r="33.700" fill="#fff"/>
<circle cx="172.500" cy="506.500" r="15.700" fill="#3f2530"/><circle cx="236" cy="506.500" r="15.700" fill="#3f2530"/>
<path d="M177.300 565.500C177.300 553 190 545.700 204 545.700C218 545.700 231 553 231 565.500Z" fill="#f6d6f8"/>
<path d="M177.300 565.500H231V590.500A26.850 26.850 0 0 1 177.300 590.500Z" fill="url(#mo)"/>
</g>
</svg>
</body></html>
